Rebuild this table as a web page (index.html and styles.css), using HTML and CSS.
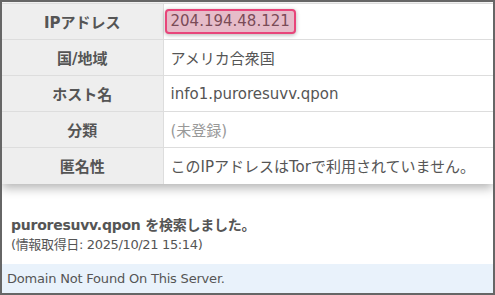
FILE: index.html
```html
<!DOCTYPE html>
<html lang="ja">
<head>
<meta charset="utf-8">
<title>IP情報</title>
<link rel="stylesheet" href="styles.css">
</head>
<body>
<div class="frame">
  <table class="info">
    <tr><th>IPアドレス</th><td><span class="ip">204.194.48.121</span></td></tr>
    <tr><th>国/地域</th><td>アメリカ合衆国</td></tr>
    <tr><th>ホスト名</th><td>info1.puroresuvv.qpon</td></tr>
    <tr><th>分類</th><td class="muted">(未登録)</td></tr>
    <tr><th>匿名性</th><td>このIPアドレスはTorで利用されていません。</td></tr>
  </table>
  <div class="search">
    <div class="title">puroresuvv.qpon を検索しました。</div>
    <div class="date">(情報取得日: 2025/10/21 15:14)</div>
  </div>
  <div class="notice">Domain Not Found On This Server.</div>
</div>
</body>
</html>
```

FILE: styles.css
```css
html, body {
  margin: 0;
  padding: 0;
  background: #fff;
}
.frame {
  width: 495px;
  height: 295px;
  box-sizing: border-box;
  border: 2px solid #666;
  display: flex;
  flex-direction: column;
  font-family: "DejaVu Sans", "Noto Sans CJK JP", sans-serif;
  color: #555;
  overflow: hidden;
}
.info {
  width: 100%;
  border-collapse: collapse;
  margin-top: 1px;
  border-top: 1px solid #ddd;
  box-shadow: 0 4px 10px rgba(0, 0, 0, 0.3);
  font-size: 15px;
}
.info th,
.info td {
  height: 36px;
  padding: 0;
  border-bottom: 1px solid #ddd;
  box-sizing: border-box;
}
.info tr:last-child th,
.info tr:last-child td {
  border-bottom: none;
}
.info th {
  width: 161px;
  background: #eee;
  border-right: 1px solid #ddd;
  font-weight: bold;
  text-align: center;
  color: #555;
}
.info td {
  padding-left: 7px;
  text-align: left;
  background: #fff;
}
.muted {
  color: #999;
}
.ip {
  display: inline-block;
  margin-left: -6px;
  padding: 1px 4px 2px 4px;
  border: 2px solid #e8457a;
  border-radius: 4px;
  background: #e6bcc9;
  color: #7a4b57;
  box-shadow: 0 1px 4px rgba(0, 0, 0, 0.3);
}
.search {
  padding: 31px 8px 0 9px;
}
.title {
  font-size: 14px;
  font-weight: bold;
  line-height: 20px;
  letter-spacing: -0.25px;
}
.date {
  font-size: 13px;
  line-height: 20px;
  letter-spacing: -0.35px;
}
.notice {
  margin-top: auto;
  height: 29px;
  box-sizing: border-box;
  padding: 0 5px;
  display: flex;
  align-items: center;
  background: #e9f2fb;
  font-size: 13px;
  letter-spacing: -0.2px;
}
```
